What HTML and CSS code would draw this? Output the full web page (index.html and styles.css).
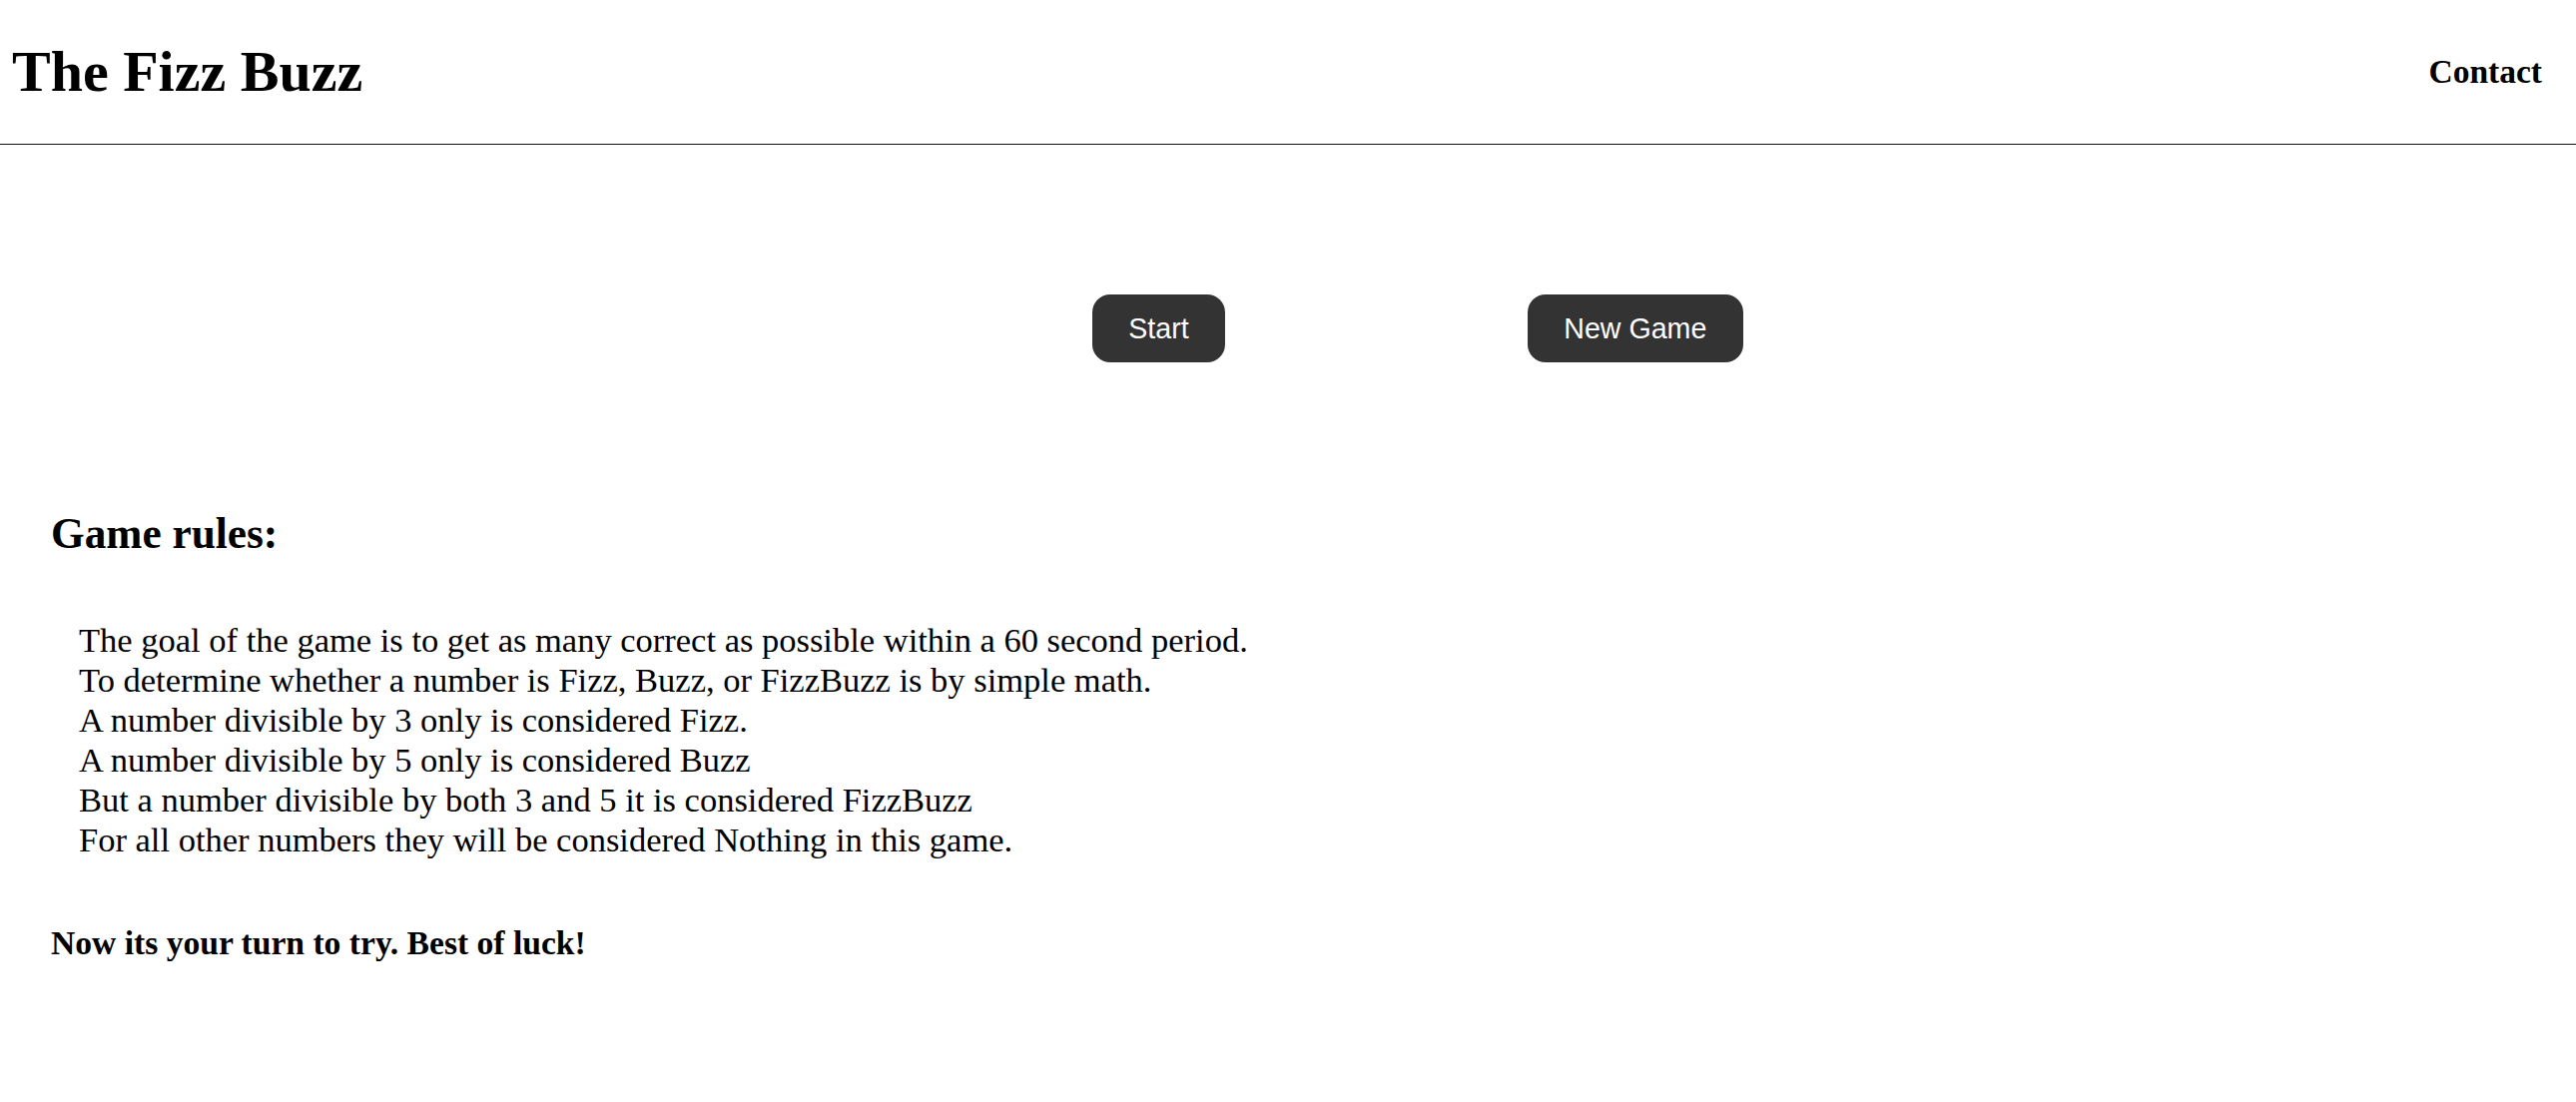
FILE: index.html
```html
<!DOCTYPE html>
<html lang="en">
<head>
<meta charset="utf-8">
<title>The Fizz Buzz</title>
<link rel="stylesheet" href="styles.css">
</head>
<body>
  <header class="site-header">
    <h1 class="site-title">The Fizz Buzz</h1>
    <a class="nav-link" href="#">Contact</a>
  </header>
  <main class="main">
    <div class="controls">
      <button class="btn">Start</button>
      <button class="btn">New Game</button>
    </div>
    <section class="rules">
      <h2 class="rules-title">Game rules:</h2>
      <p class="rules-text">The goal of the game is to get as many correct as possible within a 60 second period.<br>To determine whether a number is Fizz, Buzz, or FizzBuzz is by simple math.<br>A number divisible by 3 only is considered Fizz.<br>A number divisible by 5 only is considered Buzz<br>But a number divisible by both 3 and 5 it is considered FizzBuzz<br>For all other numbers they will be considered Nothing in this game.</p>
      <p class="rules-luck">Now its your turn to try. Best of luck!</p>
    </section>
  </main>
</body>
</html>
```
FILE: styles.css
```css
html, body {
  margin: 0;
  padding: 0;
  background: #ffffff;
  color: #000000;
  font-family: "Liberation Serif", "Times New Roman", serif;
}

.site-header {
  height: 144px;
  display: flex;
  align-items: center;
  justify-content: space-between;
  padding: 0 34px 0 12px;
  border-bottom: 1px solid #111111;
}

.site-title {
  margin: 0;
  font-size: 58px;
  line-height: 66px;
  font-weight: bold;
}

.nav-link {
  font-size: 33.5px;
  line-height: 40px;
  font-weight: bold;
  color: #000000;
  text-decoration: none;
}

.controls {
  display: flex;
  gap: 303px;
  padding-left: 1094px;
  margin-top: 150px;
}

.btn {
  background: #333333;
  color: #ffffff;
  border: none;
  border-radius: 18px;
  font-family: "Liberation Sans", Arial, sans-serif;
  font-size: 28.6px;
  line-height: 32px;
  padding: 18px 36.3px;
  cursor: pointer;
}

.rules {
  padding-left: 51px;
  margin-top: 147px;
}

.rules-title {
  margin: 0;
  font-size: 43.3px;
  line-height: 49px;
  font-weight: bold;
}

.rules-text {
  margin: 62px 0 0 0;
  padding-left: 28px;
  font-size: 34.5px;
  line-height: 40px;
}

.rules-luck {
  margin: 64px 0 0 0;
  font-size: 33.6px;
  line-height: 40px;
  font-weight: bold;
}
```
